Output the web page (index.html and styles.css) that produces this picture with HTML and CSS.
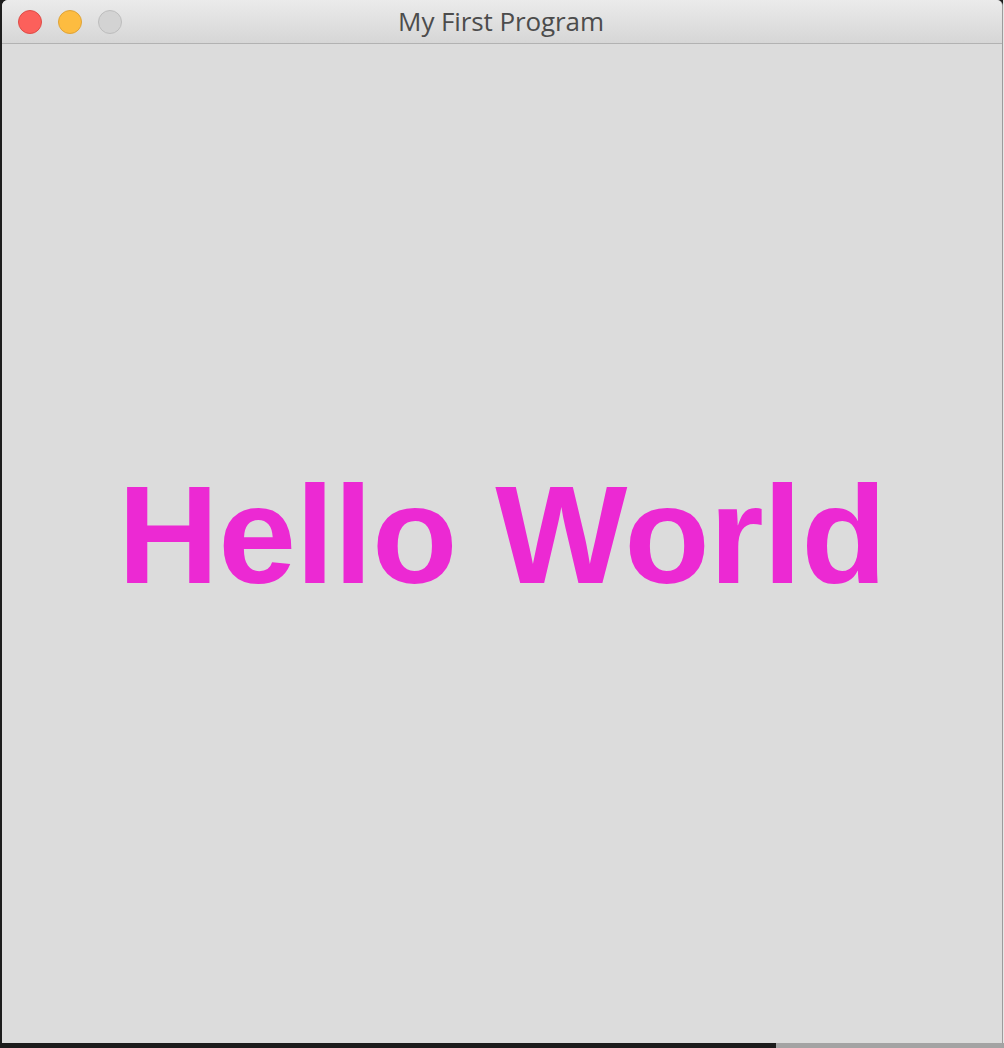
FILE: index.html
```html
<!DOCTYPE html>
<html>
<head>
<meta charset="utf-8">
<link rel="stylesheet" href="styles.css">
</head>
<body>
<div class="screen">
  <div class="window">
    <div class="titlebar">
      <div class="lights">
        <span class="light red"></span>
        <span class="light yellow"></span>
        <span class="light gray"></span>
      </div>
      <div class="title">My First Program</div>
    </div>
    <div class="content">
      <div class="hello">Hello World</div>
    </div>
  </div>
  <div class="edge"></div>
</div>
<div class="bottom">
  <div class="bottom-dark"></div>
  <div class="bottom-light"><span class="peek">Once happy</span></div>
</div>
</body>
</html>
```
FILE: styles.css
```css
html, body {
  margin: 0;
  padding: 0;
}
body {
  background: #1d1d1d;
  width: 1004px;
  height: 1048px;
  overflow: hidden;
  font-family: "Liberation Sans", Arial, sans-serif;
}
.screen {
  display: flex;
  height: 1043px;
  padding-left: 2px;
}
.window {
  width: 1000px;
  height: 1043px;
  display: flex;
  flex-direction: column;
  border-right: 1px solid #9c9c9c;
  border-radius: 6px 6px 0 0;
  overflow: hidden;
  background: #dcdcdc;
}
.titlebar {
  height: 43px;
  flex: none;
  border-bottom: 1px solid #b2b2b2;
  background: linear-gradient(#ebebeb, #d6d6d6);
  display: flex;
  align-items: center;
}
.lights {
  display: flex;
  gap: 16px;
  padding-left: 16px;
}
.light {
  width: 22px;
  height: 22px;
  border-radius: 50%;
  border: 1px solid;
  box-sizing: content-box;
}
.red { background: #fc605b; border-color: #de4c47; }
.yellow { background: #fdbc40; border-color: #dfa337; }
.gray { background: #d3d3d3; border-color: #bdbdbd; }
.title {
  flex: 1;
  text-align: center;
  margin-right: 122px;
  font-family: "Open Sans", "Noto Sans", sans-serif;
  font-size: 26px;
  color: #4c4c4c;
  letter-spacing: -0.1px;
  padding-bottom: 1px;
  white-space: nowrap;
}
.content {
  flex: 1;
  display: flex;
  align-items: center;
  justify-content: center;
  padding-bottom: 18px;
}
.hello {
  font-family: "Liberation Sans", Arial, sans-serif;
  font-weight: bold;
  font-size: 140px;
  color: #ec29d3;
  letter-spacing: -0.6px;
  line-height: 160px;
}
.edge {
  width: 1px;
  height: 1043px;
  background: #e6e6e6;
}
.bottom {
  display: flex;
  height: 5px;
}
.bottom-dark {
  width: 776px;
  background: #1c1c1c;
}
.bottom-light {
  flex: 1;
  background: #a3a3a3;
  overflow: hidden;
  position: relative;
}
.peek {
  position: absolute;
  left: 80px;
  top: 0;
  font-family: "Liberation Sans", Arial, sans-serif;
  font-size: 30px;
  line-height: 30px;
  color: #1a1a1a;
}
```
